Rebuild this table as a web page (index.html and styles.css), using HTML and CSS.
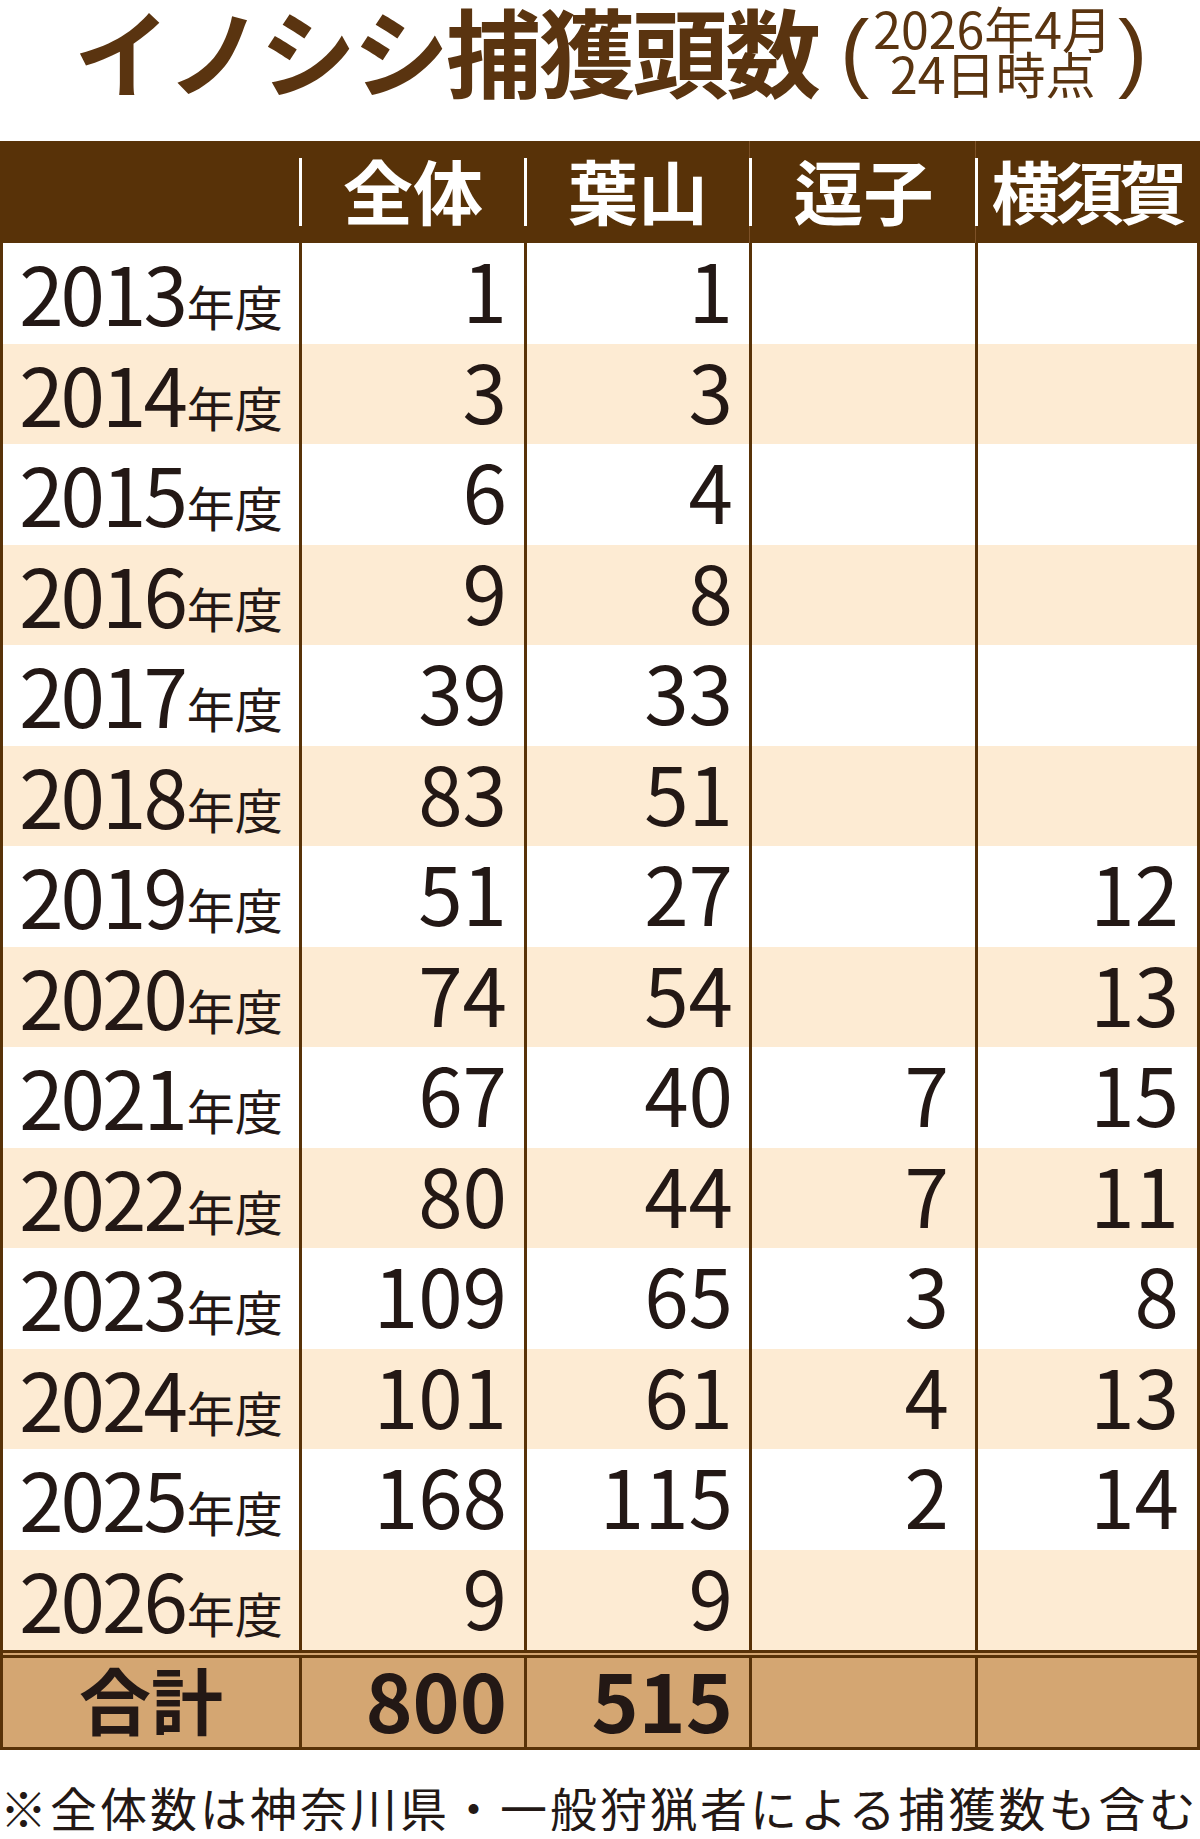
FILE: index.html
```html
<!DOCTYPE html>
<html lang="ja">
<head>
<meta charset="utf-8">
<title>イノシシ捕獲頭数</title>
<link rel="stylesheet" href="styles.css">
</head>
<body>
<div class="page">
  <h1 class="title">
    <span class="title-main">イノシシ捕獲頭数</span>
    <span class="paren">(</span>
    <span class="asof"><span>2026年4月</span><span>24日時点</span></span>
    <span class="paren">)</span>
  </h1>

  <div class="table">
    <div class="row head">
      <div class="hcell"></div>
      <div class="hcell"><span class="bar"></span><span class="htext">全体</span></div>
      <div class="hcell"><span class="bar"></span><span class="htext">葉山</span></div>
      <div class="hcell line"><span class="bar"></span><span class="htext">逗子</span></div>
      <div class="hcell line"><span class="bar"></span><span class="htext narrow">横須賀</span></div>
    </div>

    <div class="row"><div class="cell year"><span class="yr">2013</span><span class="nendo">年度</span></div><div class="cell num c1">1</div><div class="cell num c2">1</div><div class="cell num c3"></div><div class="cell num c4"></div></div>
    <div class="row alt"><div class="cell year"><span class="yr">2014</span><span class="nendo">年度</span></div><div class="cell num c1">3</div><div class="cell num c2">3</div><div class="cell num c3"></div><div class="cell num c4"></div></div>
    <div class="row"><div class="cell year"><span class="yr">2015</span><span class="nendo">年度</span></div><div class="cell num c1">6</div><div class="cell num c2">4</div><div class="cell num c3"></div><div class="cell num c4"></div></div>
    <div class="row alt"><div class="cell year"><span class="yr">2016</span><span class="nendo">年度</span></div><div class="cell num c1">9</div><div class="cell num c2">8</div><div class="cell num c3"></div><div class="cell num c4"></div></div>
    <div class="row"><div class="cell year"><span class="yr">2017</span><span class="nendo">年度</span></div><div class="cell num c1">39</div><div class="cell num c2">33</div><div class="cell num c3"></div><div class="cell num c4"></div></div>
    <div class="row alt"><div class="cell year"><span class="yr">2018</span><span class="nendo">年度</span></div><div class="cell num c1">83</div><div class="cell num c2">51</div><div class="cell num c3"></div><div class="cell num c4"></div></div>
    <div class="row"><div class="cell year"><span class="yr">2019</span><span class="nendo">年度</span></div><div class="cell num c1">51</div><div class="cell num c2">27</div><div class="cell num c3"></div><div class="cell num c4">12</div></div>
    <div class="row alt"><div class="cell year"><span class="yr">2020</span><span class="nendo">年度</span></div><div class="cell num c1">74</div><div class="cell num c2">54</div><div class="cell num c3"></div><div class="cell num c4">13</div></div>
    <div class="row"><div class="cell year"><span class="yr">2021</span><span class="nendo">年度</span></div><div class="cell num c1">67</div><div class="cell num c2">40</div><div class="cell num c3">7</div><div class="cell num c4">15</div></div>
    <div class="row alt"><div class="cell year"><span class="yr">2022</span><span class="nendo">年度</span></div><div class="cell num c1">80</div><div class="cell num c2">44</div><div class="cell num c3">7</div><div class="cell num c4">11</div></div>
    <div class="row"><div class="cell year"><span class="yr">2023</span><span class="nendo">年度</span></div><div class="cell num c1">109</div><div class="cell num c2">65</div><div class="cell num c3">3</div><div class="cell num c4">8</div></div>
    <div class="row alt"><div class="cell year"><span class="yr">2024</span><span class="nendo">年度</span></div><div class="cell num c1">101</div><div class="cell num c2">61</div><div class="cell num c3">4</div><div class="cell num c4">13</div></div>
    <div class="row"><div class="cell year"><span class="yr">2025</span><span class="nendo">年度</span></div><div class="cell num c1">168</div><div class="cell num c2">115</div><div class="cell num c3">2</div><div class="cell num c4">14</div></div>
    <div class="row alt"><div class="cell year"><span class="yr">2026</span><span class="nendo">年度</span></div><div class="cell num c1">9</div><div class="cell num c2">9</div><div class="cell num c3"></div><div class="cell num c4"></div></div>

    <div class="row total">
      <div class="cell tlabel">合計</div>
      <div class="cell num tnum c1">800</div>
      <div class="cell num tnum c2">515</div>
      <div class="cell num tnum c3"></div>
      <div class="cell num tnum c4"></div>
    </div>
  </div>

  <p class="note">※全体数は神奈川県・一般狩猟者による捕獲数も含む</p>
</div>
</body>
</html>
```

FILE: styles.css
```css
html, body {
  margin: 0;
  padding: 0;
  background: #ffffff;
}

.page {
  width: 1200px;
  font-family: "Noto Sans CJK JP", "Noto Sans", sans-serif;
  color: #231815;
}

.title {
  margin: 0;
  height: 141px;
  box-sizing: border-box;
  padding-top: 1px;
  padding-left: 74px;
  display: flex;
  justify-content: flex-start;
  align-items: flex-start;
  color: #5a3410;
  font-weight: 700;
}

.title-main {
  font-size: 96px;
  line-height: 96px;
  letter-spacing: -3px;
}

.paren {
  font-family: "Liberation Sans", sans-serif;
  font-weight: 400;
  font-size: 88px;
  line-height: 100px;
  color: #5a3410;
  margin-left: 22px;
}

.paren + .asof + .paren {
  margin-left: 6px;
}

.asof {
  display: flex;
  flex-direction: column;
  align-items: center;
  font-size: 50px;
  line-height: 45px;
  font-weight: 400;
  margin-left: 4px;
  padding-top: 4px;
}

.table {
  width: 1200px;
  box-sizing: border-box;
  border-left: 3px solid #583208;
  border-right: 3px solid #583208;
}

.row {
  display: grid;
  grid-template-columns: 296px 225px 225px 226px 222px;
  height: 100.5px;
  background: #ffffff;
}

.row.alt {
  background: #fdebd3;
}

.row.head {
  height: 102px;
  background: #583208;
}

.hcell {
  display: flex;
  align-items: center;
  box-sizing: border-box;
}

.hcell.line {
  border-left: 1px solid #7d5127;
}

.bar {
  width: 3px;
  height: 68px;
  background: #ffffff;
  flex: none;
}

.hcell.line .bar {
  margin-left: -1px;
}

.htext {
  flex: 1;
  text-align: center;
  color: #ffffff;
  font-weight: 700;
  font-size: 70px;
  line-height: 70px;
  padding-bottom: 4px;
}

.htext.narrow {
  letter-spacing: -4px;
  font-size: 68px;
}

.cell {
  box-sizing: border-box;
  display: flex;
  align-items: center;
  padding-bottom: 10px;
}

.cell + .cell {
  border-left: 3px solid #583208;
}

.year {
  justify-content: center;
  align-items: baseline;
  padding-top: 8px;
}

.yr {
  font-size: 80px;
  line-height: 80px;
  letter-spacing: -3px;
}

.nendo {
  font-size: 48px;
  line-height: 48px;
  margin-left: 2px;
}

.num {
  justify-content: flex-end;
  font-size: 80px;
  line-height: 80px;
}

.c1 { padding-right: 17px; }
.c2 { padding-right: 16px; }
.c3 { padding-right: 26px; }
.c4 { padding-right: 18px; }

.row.total {
  height: 100px;
  box-sizing: border-box;
  background: #d4a672;
  border-top: 8px double #583208;
  border-bottom: 3px solid #583208;
}

.tlabel {
  justify-content: center;
  font-weight: 700;
  font-size: 72px;
  line-height: 72px;
}

.tnum {
  font-weight: 700;
}

.note {
  margin: 33px 0 0 0;
  font-size: 47px;
  line-height: 48px;
  letter-spacing: 3px;
  white-space: nowrap;
}
```
